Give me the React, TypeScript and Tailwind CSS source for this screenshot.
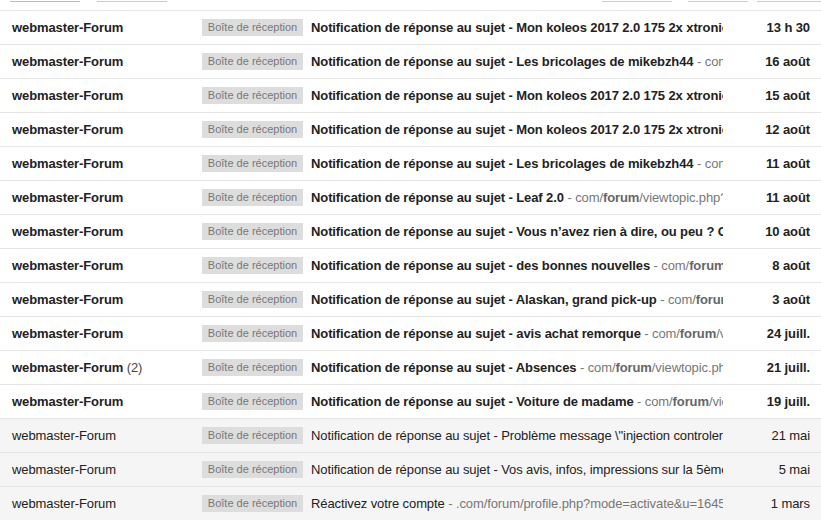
import { FC } from "react";

type Mail = {
  count?: number;
  title: string;
  topic?: string;
  snippet?: string[];
  date: string;
  unread: boolean;
};

const mails: Mail[] = [
  { title: "Notification de réponse au sujet - ", topic: "Mon koleos 2017 2.0 175 2x xtronic", date: "13 h 30", unread: true },
  { title: "Notification de réponse au sujet - ", topic: "Les bricolages de mikebzh44", snippet: ["com/", "forum", "/viewtopic.php"], date: "16 août", unread: true },
  { title: "Notification de réponse au sujet - ", topic: "Mon koleos 2017 2.0 175 2x xtronic", date: "15 août", unread: true },
  { title: "Notification de réponse au sujet - ", topic: "Mon koleos 2017 2.0 175 2x xtronic", date: "12 août", unread: true },
  { title: "Notification de réponse au sujet - ", topic: "Les bricolages de mikebzh44", snippet: ["com/", "forum", "/viewtopic.php"], date: "11 août", unread: true },
  { title: "Notification de réponse au sujet - ", topic: "Leaf 2.0", snippet: ["com/", "forum", "/viewtopic.php?f=1"], date: "11 août", unread: true },
  { title: "Notification de réponse au sujet - ", topic: "Vous n’avez rien à dire, ou peu ? Ok", date: "10 août", unread: true },
  { title: "Notification de réponse au sujet - ", topic: "des bonnes nouvelles", snippet: ["com/", "forum", "/viewtopic.php"], date: "8 août", unread: true },
  { title: "Notification de réponse au sujet - ", topic: "Alaskan, grand pick-up", snippet: ["com/", "forum", "/viewtopic.php"], date: "3 août", unread: true },
  { title: "Notification de réponse au sujet - ", topic: "avis achat remorque", snippet: ["com/", "forum", "/viewtopic.php"], date: "24 juill.", unread: true },
  { count: 2, title: "Notification de réponse au sujet - ", topic: "Absences", snippet: ["com/", "forum", "/viewtopic.php"], date: "21 juill.", unread: true },
  { title: "Notification de réponse au sujet - ", topic: "Voiture de madame", snippet: ["com/", "forum", "/viewtopic.php"], date: "19 juill.", unread: true },
  { title: "Notification de réponse au sujet - Problème message \\\"injection controlere\"", date: "21 mai", unread: false },
  { title: "Notification de réponse au sujet - Vos avis, infos, impressions sur la 5ème", date: "5 mai", unread: false },
  { title: "Réactivez votre compte", snippet: [".com/forum/profile.php?mode=activate&u=16455"], date: "1 mars", unread: false },
];

const Row: FC<{ mail: Mail }> = ({ mail }) => (
  <div
    className={`flex h-[34px] items-center border-t border-[#e5e5e5] text-[13px] tracking-[-0.1px] text-[#222] ${
      mail.unread ? "bg-white" : "bg-[#f5f5f5]"
    }`}
  >
    <div className="w-[202px] shrink-0 pl-[12px] whitespace-nowrap">
      <span className={mail.unread ? "font-bold" : ""}>webmaster-Forum</span>
      {mail.count ? <span className="text-[#444]"> ({mail.count})</span> : null}
    </div>
    <div className="mt-[-1px] flex h-[17px] w-[101px] shrink-0 items-center justify-center bg-[#dddddd] text-[11px] tracking-normal text-[#777]">
      Boîte de réception
    </div>
    <div className="ml-[8px] w-[412px] shrink-0 overflow-hidden whitespace-nowrap">
      <span className={mail.unread ? "font-bold" : ""}>
        {mail.title}
        {mail.topic}
      </span>
      {mail.snippet ? (
        <span className="text-[#777]">
          {" - "}
          {mail.snippet.map((part, i) =>
            part === "forum" ? (
              <b key={i} className="text-[#666]">
                {part}
              </b>
            ) : (
              <span key={i}>{part}</span>
            ),
          )}
        </span>
      ) : null}
    </div>
    <div className={`flex-1 pr-[11px] text-right whitespace-nowrap ${mail.unread ? "font-bold" : ""}`}>
      {mail.date}
    </div>
  </div>
);

export default function App() {
  return (
    <div className="h-[520px] w-[821px] overflow-hidden bg-white font-['Liberation_Sans',Arial,sans-serif]">
      <div className="flex h-[10px] items-start">
        <div className="ml-[10px] h-[2px] w-[70px] border-b border-[#bbb]" />
        <div className="ml-[17px] h-[2px] w-[70px] border-b border-[#ccc]" />
        <div className="ml-auto h-[2px] w-[70px] border-b border-[#ccc]" />
        <div className="ml-[16px] h-[2px] w-[60px] border-b border-[#ccc]" />
        <div className="ml-[9px] h-[2px] w-[64px] border-b border-[#ccc]" />
      </div>
      {mails.map((mail, i) => (
        <Row key={i} mail={mail} />
      ))}
    </div>
  );
}
